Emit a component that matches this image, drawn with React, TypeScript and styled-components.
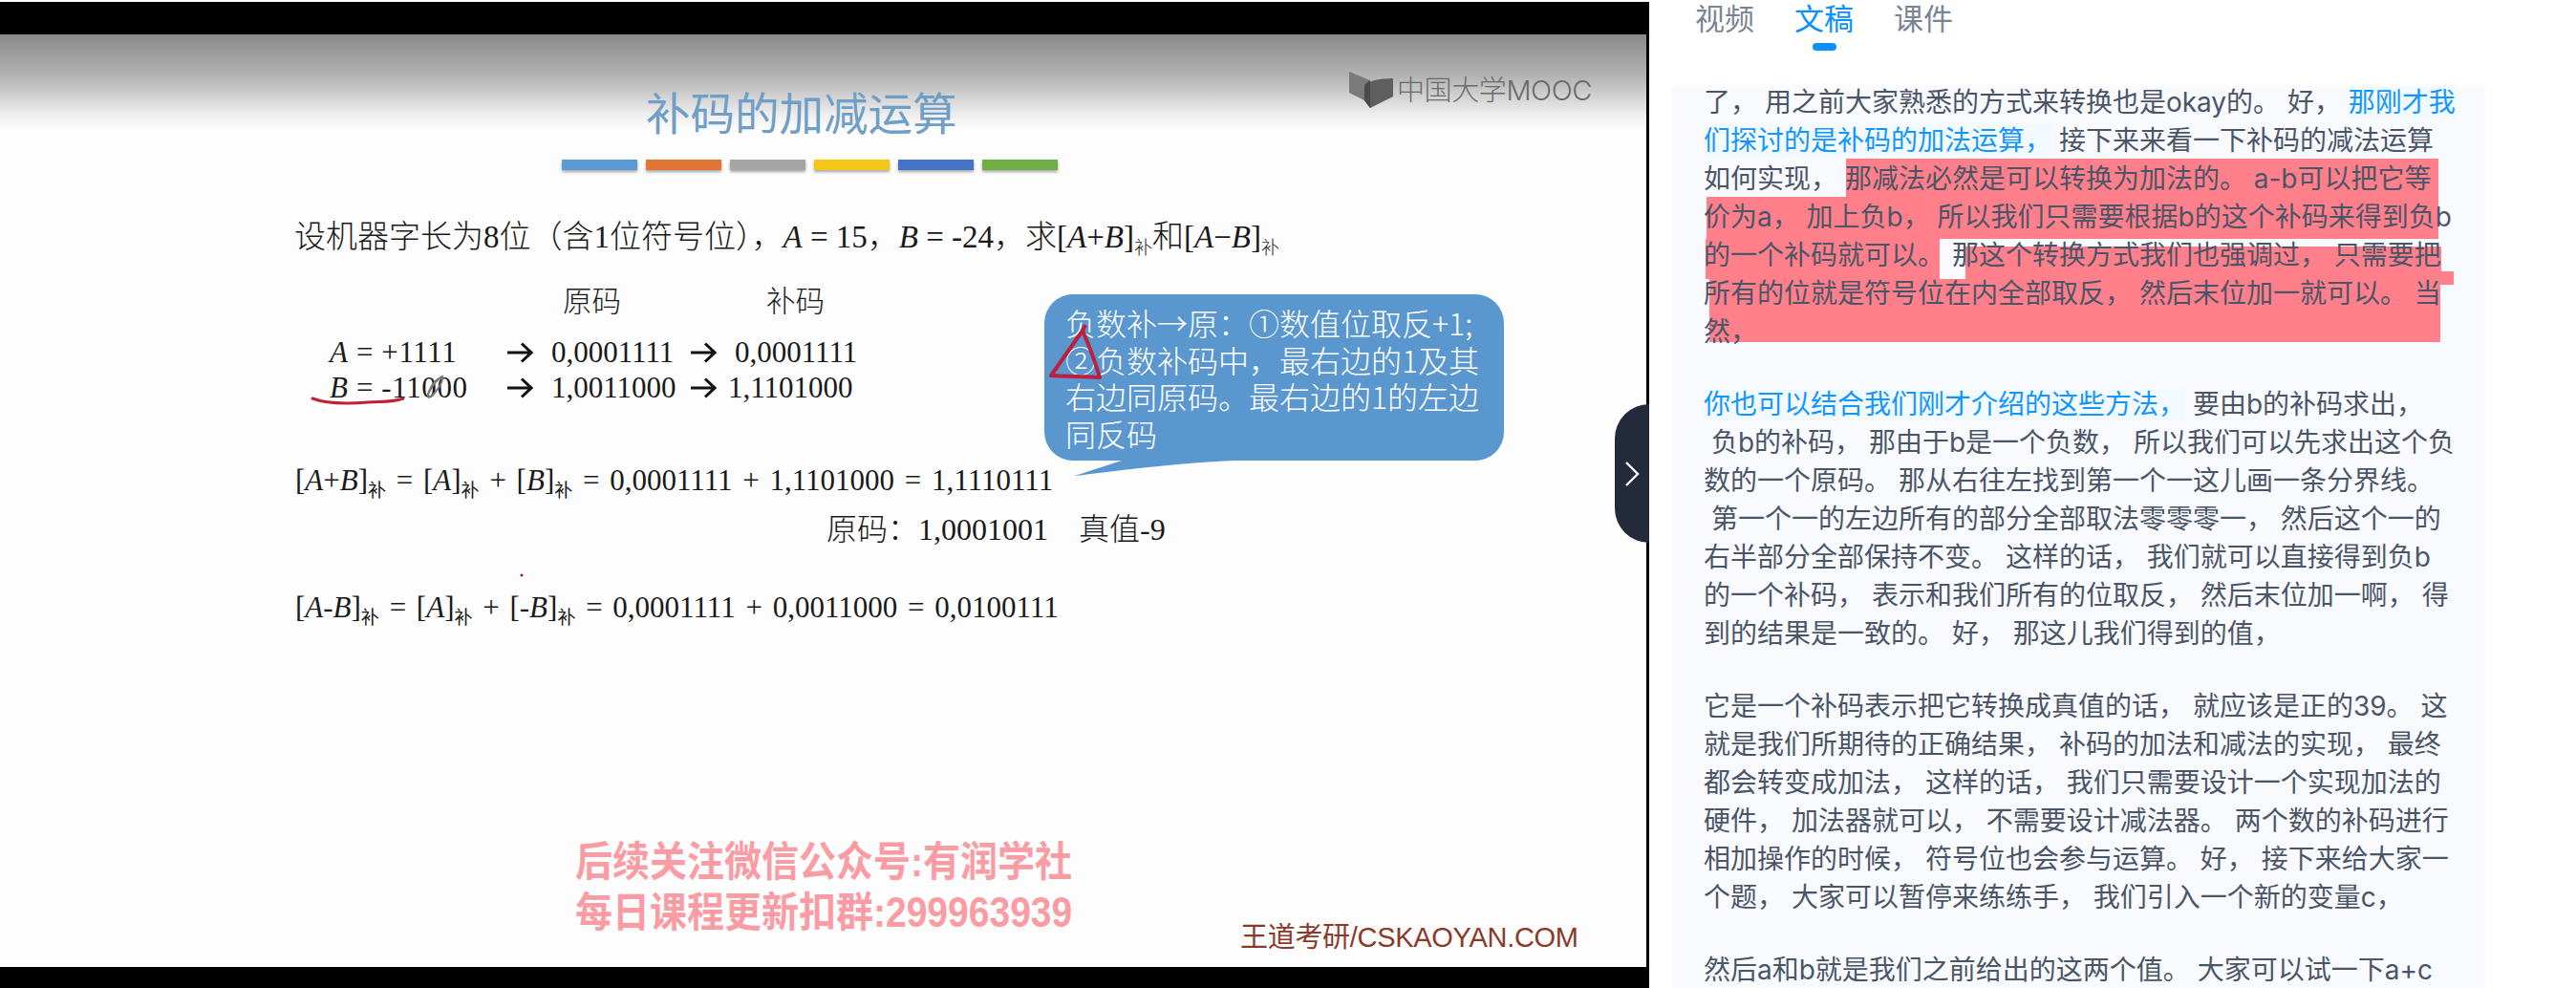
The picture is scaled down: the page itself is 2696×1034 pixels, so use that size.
import { FC, Fragment } from "react";
import styled, { createGlobalStyle } from "styled-components";

const GlobalStyle = createGlobalStyle`
  html, body {
    margin: 0;
    padding: 0;
    background: #fff;
  }
`;

const serif = `"Liberation Serif", "Noto Sans CJK SC", serif`;
const sans = `Inter, "Noto Sans CJK SC", sans-serif`;

const App: FC = () => {
  return (
    <Page>
      <GlobalStyle />
      <VideoPane>
        <BlackBar />
        <Slide>
          <Logo>
            <LogoMark />
            <LogoText>中国大学MOOC</LogoText>
          </Logo>
          <Title>补码的加减运算</Title>
          <Bars>
            {barColors.map((c) => (
              <Bar key={c} $color={c} />
            ))}
          </Bars>
          <Question>
            设机器字长为8位（含1位符号位），<i>A</i> = 15，<i>B</i> = -24，求[<i>A</i>+<i>B</i>]<Sub>补</Sub>和[<i>A</i>−<i>B</i>]<Sub>补</Sub>
          </Question>
          <TableHead>
            <span>原码</span>
            <span>补码</span>
          </TableHead>
          <CodeTable>
            <CodeLabel><i>A</i> = +1111</CodeLabel>
            <Arrow />
            <span>0,0001111</span>
            <Arrow />
            <span>0,0001111</span>
            <CodeLabel><i>B</i> = -11000</CodeLabel>
            <Arrow />
            <span>1,0011000</span>
            <Arrow />
            <LastCode>1,1101000</LastCode>
          </CodeTable>
          <Equation>
            [<i>A</i>+<i>B</i>]<Sub>补</Sub> = [<i>A</i>]<Sub>补</Sub> + [<i>B</i>]<Sub>补</Sub> = 0,0001111 + 1,1101000 = 1,1110111
          </Equation>
          <ResultRow>原码：1,0001001&nbsp;&nbsp;&nbsp;&nbsp;真值-9</ResultRow>
          <EquationTwo>
            [<i>A</i>-<i>B</i>]<Sub>补</Sub> = [<i>A</i>]<Sub>补</Sub> + [-<i>B</i>]<Sub>补</Sub> = 0,0001111 + 0,0011000 = 0,0100111
          </EquationTwo>
          <SlideFooter>
            <Promo>
              <span>后续关注微信公众号:有润学社</span>
              <span>每日课程更新扣群:299963939</span>
            </Promo>
            <Brand>王道考研/CSKAOYAN.COM</Brand>
          </SlideFooter>

          <Callout>
            <CalloutTail viewBox="0 0 170 20" preserveAspectRatio="none">
              <path d="M50 0 L0 18 C60 10 110 3 168 0 Z" fill="#5b97cf" />
            </CalloutTail>
            负数补→原：①数值位取反+1;<br />
            ②负数补码中，最右边的1及其<br />
            右边同原码。最右边的1的左边<br />
            同反码
          </Callout>
          <Ink viewBox="0 0 1726 976">
            <path d="M327 381 C340 386 360 387 385 385 C400 384 412 385 422 381" fill="none" stroke="#c41e3a" strokeWidth="3" strokeLinecap="round" />
            <path d="M447 378 C452 368 458 360 463 358 C464 364 456 376 449 380 C446 376 453 364 459 360" fill="none" stroke="#777" strokeWidth="2" />
            <path d="M1136 304 L1133 310 L1100 357 C1115 358 1135 358 1151 359 C1146 342 1140 326 1133 310" fill="none" stroke="#bf1f3f" strokeWidth="4" strokeLinejoin="round" />
            <circle cx="546" cy="566" r="1.5" fill="#a01030" />
          </Ink>
        </Slide>
        <BlackBarBottom />
        <Toggle>
          <svg width="18" height="26" viewBox="0 0 18 26" fill="none">
            <path d="M3 1 L15 13 L3 25" stroke="#fff" strokeWidth="2.4" />
          </svg>
        </Toggle>
      </VideoPane>

      <SidePane>
        <Tabs>
          <Tab>视频</Tab>
          <Tab $active>文稿</Tab>
          <Tab>课件</Tab>
        </Tabs>
        <Transcript>
          <Highlights>
            {highlights.map(([l, t, w, h], i) => (
              <Highlight key={i} $l={l} $t={t} $w={w} $h={h} />
            ))}
          </Highlights>
          <Lines>
            {paragraphs.map((lines, i) => (
              <Paragraph key={i}>
                {lines.map((line, j) => (
                  <Line key={j}>
                    {line.map((part, k) =>
                      part.startsWith("#") ? <Blue key={k}>{part.slice(1)}</Blue> : <Fragment key={k}>{part}</Fragment>
                    )}
                  </Line>
                ))}
              </Paragraph>
            ))}
          </Lines>
        </Transcript>
      </SidePane>
    </Page>
  );
};

export default App;

const LogoMark: FC = () => (
  <svg width="46" height="38" viewBox="0 0 46 38">
    <path d="M0 0 L22 9 L22 38 L16 30 L0 22 Z" fill="#7a7a7a" />
    <path d="M16 14 C20 10 30 7 46 7 L46 26 L22 38 L16 30 Z" fill="#5f5f5f" />
    <path d="M16 14 L22 9 L22 38 L16 30 Z" fill="#4a4a4a" />
  </svg>
);

const Arrow: FC = () => (
  <svg width="28" height="22" viewBox="0 0 28 22" fill="none">
    <path d="M1 11 H26 M16 1.5 L26 11 L16 20.5" stroke="#111" strokeWidth="3" />
  </svg>
);

const barColors = ["#5b9bd5", "#e07535", "#a5a5a5", "#f5c518", "#4472c4", "#70ad47"];

// left, top, width, height relative to the transcript panel
const highlights: number[][] = [
  [182, 76, 620, 40],
  [36, 116, 766, 44],
  [35, 160, 245, 42],
  [307, 168, 498, 26],
  [307, 194, 511, 14],
  [307, 208, 497, 20],
  [39, 202, 765, 66],
];

const paragraphs: string[][][] = [
  [
    ["了， 用之前大家熟悉的方式来转换也是okay的。 好， ", "#那刚才我"],
    ["#们探讨的是补码的加法运算，", " 接下来来看一下补码的减法运算"],
    ["如何实现， 那减法必然是可以转换为加法的。 a-b可以把它等"],
    ["价为a， 加上负b， 所以我们只需要根据b的这个补码来得到负b"],
    ["的一个补码就可以。 那这个转换方式我们也强调过， 只需要把"],
    ["所有的位就是符号位在内全部取反， 然后末位加一就可以。 当"],
    ["然，"],
  ],
  [
    ["#你也可以结合我们刚才介绍的这些方法，", " 要由b的补码求出，"],
    [" 负b的补码， 那由于b是一个负数， 所以我们可以先求出这个负"],
    ["数的一个原码。 那从右往左找到第一个一这儿画一条分界线。"],
    [" 第一个一的左边所有的部分全部取法零零零一， 然后这个一的"],
    ["右半部分全部保持不变。 这样的话， 我们就可以直接得到负b"],
    ["的一个补码， 表示和我们所有的位取反， 然后末位加一啊， 得"],
    ["到的结果是一致的。 好， 那这儿我们得到的值，"],
  ],
  [
    ["它是一个补码表示把它转换成真值的话， 就应该是正的39。 这"],
    ["就是我们所期待的正确结果， 补码的加法和减法的实现， 最终"],
    ["都会转变成加法， 这样的话， 我们只需要设计一个实现加法的"],
    ["硬件， 加法器就可以， 不需要设计减法器。 两个数的补码进行"],
    ["相加操作的时候， 符号位也会参与运算。 好， 接下来给大家一"],
    ["个题， 大家可以暂停来练练手， 我们引入一个新的变量c，"],
  ],
  [["然后a和b就是我们之前给出的这两个值。 大家可以试一下a+c"]],
];

const Page = styled.div`
  display: flex;
  width: 2696px;
  height: 1034px;
  overflow: hidden;
  background: #fff;
`;

const VideoPane = styled.div`
  position: relative;
  display: flex;
  flex-direction: column;
  flex: 0 0 1726px;
  height: 1034px;
  padding-top: 2px;
  box-sizing: border-box;
  background: #000;
  box-shadow: inset 0 2px 0 #fff;
`;

const BlackBar = styled.div`
  flex: 0 0 34px;
  background: #000;
`;

const BlackBarBottom = styled.div`
  flex: 0 0 22px;
  background: #000;
`;

const Slide = styled.div`
  position: relative;
  display: flex;
  flex-direction: column;
  flex: 1;
  margin-right: 3px;
  padding-top: 57px;
  background: linear-gradient(#8a8a8a 0, #b5b5b5 45px, #efefef 85px, #fdfdfd 100px, #fdfdfd 100%);
  font-family: ${serif};
  color: #1a1a1a;
`;

const Logo = styled.div`
  position: absolute;
  top: 39px;
  left: 1412px;
  display: flex;
  gap: 4px;
`;

const LogoText = styled.span`
  margin-top: 3px;
  font-family: ${sans};
  font-size: 29px;
  font-weight: 300;
  line-height: 34px;
  letter-spacing: -0.4px;
  color: #6b6b6b;
  white-space: nowrap;
`;

const Title = styled.h1`
  margin: 0 0 0 676px;
  font-family: "Noto Sans CJK SC", sans-serif;
  font-size: 46.5px;
  font-weight: 400;
  line-height: 46px;
  color: #6f9ec7;
`;

const Bars = styled.div`
  display: flex;
  gap: 9px;
  margin: 28px 0 0 588px;
`;

const Bar = styled.div<{ $color: string }>`
  width: 79px;
  height: 11px;
  background: ${(p) => p.$color};
  box-shadow: 0 2px 3px rgba(0, 0, 0, 0.35);
`;

const Question = styled.div`
  margin: 50px 0 0 308px;
  font-size: 33px;
  font-weight: 300;
  line-height: 40px;
  white-space: nowrap;
`;

const Sub = styled.sub`
  font-size: 19px;
  line-height: 0;
  vertical-align: -7px;
`;

const TableHead = styled.div`
  display: flex;
  gap: 152px;
  margin: 28px 0 0 589px;
  font-size: 30.5px;
  font-weight: 300;
  line-height: 40px;
`;

const CodeTable = styled.div`
  display: grid;
  grid-template-columns: 185px 47px 145px 47px auto;
  grid-auto-rows: 37px;
  align-items: center;
  margin: 14px 0 0 345px;
  font-size: 31px;
  line-height: 37px;
  white-space: nowrap;
`;

const CodeLabel = styled.span`
  letter-spacing: 0.6px;
`;

const LastCode = styled.span`
  margin-left: -7px;
`;

const Equation = styled.div`
  margin: 59px 0 0 309px;
  font-size: 31px;
  line-height: 40px;
  word-spacing: 3px;
  white-space: nowrap;
`;

const EquationTwo = styled(Equation)`
  margin-top: 42px;
`;

const ResultRow = styled.div`
  margin: 11px 0 0 865px;
  font-size: 32px;
  font-weight: 300;
  line-height: 40px;
  white-space: nowrap;
`;

const SlideFooter = styled.div`
  display: flex;
  align-items: flex-end;
  margin-top: auto;
  padding: 0 0 13px 602px;
`;

const Promo = styled.div`
  display: flex;
  flex-direction: column;
  flex: 0 0 696px;
  margin-bottom: 23px;
  font-family: "Liberation Sans", "Noto Sans CJK SC", sans-serif;
  font-size: 39px;
  font-weight: 700;
  line-height: 47.5px;
  color: #fa9ca3;
  white-space: nowrap;
  transform: scaleY(1.12);
`;

const Brand = styled.div`
  font-family: "Liberation Sans", "Noto Sans CJK SC", sans-serif;
  font-size: 29px;
  line-height: 36px;
  letter-spacing: -0.3px;
  color: #8b3a2a;
  white-space: nowrap;
`;

const Callout = styled.div`
  position: absolute;
  top: 272px;
  left: 1093px;
  width: 481px;
  height: 174px;
  padding: 10px 0 0 22px;
  box-sizing: border-box;
  border-radius: 30px;
  background: #5b97cf;
  font-family: "Noto Sans CJK SC", sans-serif;
  font-size: 32px;
  font-weight: 300;
  line-height: 38.6px;
  color: #fff;
  white-space: nowrap;
`;

const CalloutTail = styled.svg`
  position: absolute;
  top: 174px;
  left: 31px;
  width: 170px;
  height: 18px;
`;

const Ink = styled.svg`
  position: absolute;
  top: 0;
  left: 0;
  width: 1726px;
  height: 976px;
  pointer-events: none;
`;

const Toggle = styled.div`
  position: absolute;
  top: 423px;
  right: 0;
  display: flex;
  align-items: center;
  justify-content: center;
  width: 36px;
  height: 145px;
  border-radius: 36px 0 0 36px;
  background: #232b3a;
`;

const SidePane = styled.div`
  display: flex;
  flex-direction: column;
  flex: 0 0 875px;
  padding-left: 24px;
  box-sizing: border-box;
`;

const Tabs = styled.div`
  display: flex;
  gap: 42px;
  flex: 0 0 90px;
  padding-left: 24px;
  box-sizing: border-box;
`;

const Tab = styled.div<{ $active?: boolean }>`
  position: relative;
  height: 36px;
  font-family: "Noto Sans CJK SC", sans-serif;
  font-size: 31px;
  line-height: 36px;
  color: ${(p) => (p.$active ? "#0a91ff" : "#7b8494")};

  &::after {
    content: "";
    display: ${(p) => (p.$active ? "block" : "none")};
    position: absolute;
    top: 45px;
    left: 19px;
    width: 25px;
    height: 8px;
    border-radius: 4px;
    background: #0a91ff;
  }
`;

const Transcript = styled.div`
  position: relative;
  width: 851px;
  flex: 1;
  overflow: hidden;
  background: #f8fafe;
`;

const Highlights = styled.div`
  position: absolute;
  inset: 0;
`;

const Highlight = styled.div<{ $l: number; $t: number; $w: number; $h: number }>`
  position: absolute;
  left: ${(p) => p.$l}px;
  top: ${(p) => p.$t}px;
  width: ${(p) => p.$w}px;
  height: ${(p) => p.$h}px;
  background: #ff7f8a;
`;

const Lines = styled.div`
  position: relative;
  margin-top: -3px;
  padding-left: 33px;
  font-family: ${sans};
  font-size: 28px;
  line-height: 40px;
  color: #4b5568;
`;

const Paragraph = styled.div`
  margin-bottom: 36px;
`;

const Line = styled.div`
  height: 40px;
  white-space: pre;
`;

const Blue = styled.span`
  color: #1296ff;
  background: #f3faff;
`;
